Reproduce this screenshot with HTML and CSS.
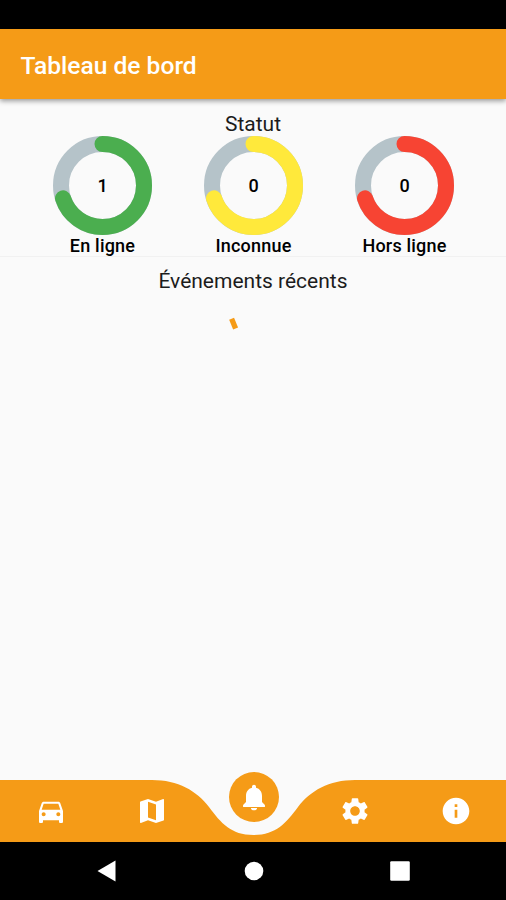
FILE: index.html
```html
<!DOCTYPE html>
<html lang="fr">
<head>
<meta charset="utf-8">
<title>Tableau de bord</title>
<link rel="stylesheet" href="styles.css">
</head>
<body>
<div class="screen">
  <div class="status-bar"></div>
  <header class="app-bar"><h1>Tableau de bord</h1></header>
  <main class="content">
    <section class="status">
      <h2>Statut</h2>
      <div class="gauges">
        <div class="gauge online">
          <div class="ring">
            <svg viewBox="0 0 99 99"><circle class="track" cx="49.5" cy="49.5" r="41.5"/><circle class="value" cx="49.5" cy="49.5" r="41.5" pathLength="100"/></svg>
            <span>1</span>
          </div>
          <p>En ligne</p>
        </div>
        <div class="gauge unknown">
          <div class="ring">
            <svg viewBox="0 0 99 99"><circle class="track" cx="49.5" cy="49.5" r="41.5"/><circle class="value" cx="49.5" cy="49.5" r="41.5" pathLength="100"/></svg>
            <span>0</span>
          </div>
          <p>Inconnue</p>
        </div>
        <div class="gauge offline">
          <div class="ring">
            <svg viewBox="0 0 99 99"><circle class="track" cx="49.5" cy="49.5" r="41.5"/><circle class="value" cx="49.5" cy="49.5" r="41.5" pathLength="100"/></svg>
            <span>0</span>
          </div>
          <p>Hors ligne</p>
        </div>
      </div>
    </section>
    <section class="events">
      <h2>Événements récents</h2>
      <svg class="spinner" viewBox="0 0 48 48"><path d="M2.600 11.700 6.600 21.500"/></svg>
    </section>
  </main>
  <nav class="tabs">
    <svg class="tabs-shape" viewBox="0 0 506 62"><path d="M0 0H152C178 0 197 11 209 27C221 43 231 55 253.500 55C276 55 286 43 298 27C310 11 329 0 355 0H506V62H0Z"/></svg>
    <a class="tab"><svg viewBox="0 0 24 24"><path d="M18.920 6.010C18.720 5.420 18.160 5 17.500 5h-11c-.66 0-1.210.42-1.420 1.010L3 12v8c0 .55.45 1 1 1h1c.55 0 1-.45 1-1v-1h12v1c0 .55.45 1 1 1h1c.55 0 1-.45 1-1v-8l-2.080-5.990zM6.500 16c-.83 0-1.500-.67-1.500-1.500S5.670 13 6.500 13s1.500.67 1.500 1.500S7.330 16 6.500 16zm11 0c-.83 0-1.500-.67-1.500-1.500s.67-1.500 1.500-1.500 1.500.67 1.500 1.500-.67 1.500-1.500 1.500zM5 11l1.500-4.500h11L19 11H5z"/></svg></a>
    <a class="tab"><svg viewBox="0 0 24 24"><path d="M20.500 3l-.16.03L15 5.100 9 3 3.360 4.900c-.21.07-.36.25-.36.48V20.500c0 .28.22.5.5.5l.16-.03L9 18.900l6 2.100 5.640-1.900c.21-.07.36-.25.36-.48V3.500c0-.28-.22-.5-.5-.5zM15 19l-6-2.110V5l6 2.110V19z"/></svg></a>
    <a class="tab active"><svg viewBox="0 0 24 24"><path d="M12 22c1.300 0 2.300-.8 2.300-1.800h-4.600c0 1 1 1.800 2.300 1.800zm6-6.200v-4.600c0-3.070-1.640-5.440-4.500-6.120V4.400c0-.83-.67-1.500-1.500-1.500s-1.500.67-1.500 1.500v.68C7.630 5.760 6 8.120 6 11.200v4.600l-2.200 2.200v1.500h16.400v-1.500l-2.200-2.200z"/></svg></a>
    <a class="tab"><svg viewBox="0 0 24 24"><path d="M19.140 12.940c.04-.3.06-.61.06-.94 0-.32-.02-.64-.07-.94l2.030-1.580c.18-.14.23-.41.12-.61l-1.920-3.320c-.12-.22-.37-.29-.59-.22l-2.390.96c-.5-.38-1.030-.7-1.620-.94l-.36-2.540c-.04-.24-.24-.41-.48-.41h-3.840c-.24 0-.43.17-.47.41l-.36 2.540c-.59.24-1.130.57-1.620.94l-2.390-.96c-.22-.08-.47 0-.59.22L2.740 8.870c-.12.21-.08.47.12.61l2.030 1.580c-.05.3-.09.63-.09.94s.02.64.07.94l-2.030 1.580c-.18.14-.23.41-.12.61l1.920 3.320c.12.22.37.29.59.22l2.390-.96c.5.38 1.030.7 1.620.94l.36 2.540c.05.24.24.41.48.41h3.840c.24 0 .44-.17.47-.41l.36-2.540c.59-.24 1.130-.56 1.620-.94l2.390.96c.22.08.47 0 .59-.22l1.920-3.320c.12-.22.07-.47-.12-.61l-2.010-1.580zM12 15.600c-1.980 0-3.600-1.620-3.600-3.600s1.620-3.600 3.600-3.600 3.600 1.620 3.600 3.600-1.620 3.600-3.600 3.600z"/></svg></a>
    <a class="tab"><svg viewBox="0 0 24 24"><path d="M12 2C6.480 2 2 6.480 2 12s4.480 10 10 10 10-4.480 10-10S17.520 2 12 2zm1 15h-2v-6h2v6zm0-8h-2V7h2v2z"/></svg></a>
  </nav>
  <div class="system-nav">
    <svg viewBox="0 0 24 24"><path d="M1.500 12 19.500 1.600V22.400Z"/></svg>
    <svg viewBox="0 0 24 24"><circle cx="12" cy="12" r="9.300"/></svg>
    <svg viewBox="0 0 24 24"><rect x="2.200" y="2.200" width="19.600" height="19.600" rx="1.200"/></svg>
  </div>
</div>
</body>
</html>
```

FILE: styles.css
```css
* { box-sizing: border-box; }
body { margin: 0; font-family: Roboto, "Liberation Sans", sans-serif; }
h1, h2, p { margin: 0; }
svg { display: block; }

.screen {
  display: flex;
  flex-direction: column;
  width: 506px;
  height: 900px;
  overflow: hidden;
  background: #fafafa;
}
.status-bar { height: 29px; background: #000; }
.app-bar {
  display: flex;
  align-items: center;
  height: 70px;
  padding: 3px 20.500px 0;
  background: #f59b17;
  box-shadow: 0 2px 5px rgba(0, 0, 0, .4);
}
.app-bar h1 { color: #fff; font-size: 24.600px; font-weight: 500; line-height: 30px; }

.content { flex: 1; }
.content h2 {
  color: #1c1c1c;
  font-size: 21px;
  font-weight: 400;
  line-height: 24px;
  text-align: center;
}
.status { height: 158px; padding-top: 13px; border-bottom: 1px solid #f1f1f1; }
.gauges { display: flex; justify-content: space-evenly; padding-left: 1px; }
.gauge { width: 99px; }
.ring { display: grid; place-items: center; height: 99px; }
.ring svg, .ring span { grid-area: 1 / 1; }
.ring svg { width: 99px; height: 99px; }
.ring span { font-size: 18px; font-weight: 500; line-height: 20px; }
.ring circle { fill: none; stroke-width: 16; }
.track { stroke: #b5c3c9; }
.value {
  stroke-dasharray: 70 100;
  stroke-linecap: round;
  transform: rotate(-90deg);
  transform-origin: center;
}
.online .value { stroke: #4bae4f; }
.unknown .value { stroke: #ffe93b; }
.offline .value { stroke: #f74433; }
.gauge p {
  font-size: 18px;
  font-weight: 500;
  line-height: 21px;
  letter-spacing: .2px;
  text-align: center;
  white-space: nowrap;
}

.events { padding-top: 12px; }
.spinner { width: 48px; height: 48px; margin: 14px auto 0; }
.spinner path { stroke: #f59b17; stroke-width: 5.300; fill: none; }

.tabs { position: relative; display: flex; height: 62px; padding-left: 1px; }
.tabs-shape { position: absolute; inset: 0; width: 506px; height: 62px; fill: #f59b17; }
.tab {
  position: relative;
  display: flex;
  flex: 1;
  align-items: center;
  justify-content: center;
  padding-bottom: 1px;
}
.tab svg { width: 32px; height: 32px; fill: #fff; }
.tab.active {
  flex: none;
  width: 50px;
  height: 50px;
  margin: -8px 25.600px 0;
  border-radius: 50%;
  background: #f59b17;
}

.system-nav {
  display: flex;
  align-items: center;
  justify-content: center;
  gap: 122px;
  height: 58px;
  padding-left: 1px;
  background: #000;
}
.system-nav svg { width: 24px; height: 24px; fill: #fff; }
```
